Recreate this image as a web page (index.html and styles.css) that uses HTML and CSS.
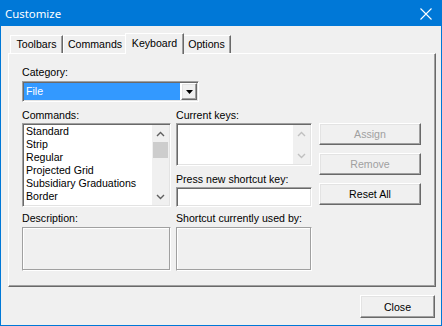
FILE: index.html
```html
<!DOCTYPE html>
<html lang="en">
<head>
  <meta charset="UTF-8">
  <title>Customize</title>
  <link rel="stylesheet" href="styles.css">
</head>
<body>
  <div class="window">
    <!-- Title bar -->
    <div class="titlebar">
      <span class="title">Customize</span>
      <svg class="close-x" width="12" height="12" viewBox="0 0 12 12">
        <path d="M0.5 0.5L11.5 11.5M11.5 0.5L0.5 11.5" stroke="#fff" stroke-width="1.1" fill="none"/>
      </svg>
    </div>

    <div class="client">
      <!-- Tabs -->
      <div class="tabs">
        <div class="tab tab-toolbars">Toolbars</div>
        <div class="tab tab-commands">Commands</div>
        <div class="tab tab-keyboard active">Keyboard</div>
        <div class="tab tab-options">Options</div>
      </div>

      <!-- Keyboard page -->
      <div class="panel">
        <div class="label">Category:</div>
        <div class="combo sunken">
          <div class="combo-value">File</div>
          <div class="combo-btn raised">
            <svg width="7" height="4" viewBox="0 0 7 4"><path d="M0 0H7L3.5 4Z" fill="#000"/></svg>
          </div>
        </div>

        <div class="keys">
          <div class="col col-commands">
            <div class="label">Commands:</div>
            <div class="listbox sunken">
              <ul class="items">
                <li>Standard</li>
                <li>Strip</li>
                <li>Regular</li>
                <li>Projected Grid</li>
                <li>Subsidiary Graduations</li>
                <li>Border</li>
                <li class="partial">Scale Bar</li>
              </ul>
              <div class="vscroll">
                <div class="arrow">
                  <svg width="9" height="6" viewBox="0 0 9 6"><path d="M1 5L4.5 1.5L8 5" stroke="#606060" stroke-width="1.4" fill="none"/></svg>
                </div>
                <div class="thumb"></div>
                <div class="track"></div>
                <div class="arrow">
                  <svg width="9" height="6" viewBox="0 0 9 6"><path d="M1 1L4.5 4.5L8 1" stroke="#606060" stroke-width="1.4" fill="none"/></svg>
                </div>
              </div>
            </div>
          </div>

          <div class="col col-keys">
            <div class="label">Current keys:</div>
            <div class="keybox sunken">
              <div class="keylist"></div>
              <div class="vscroll disabled">
                <div class="arrow">
                  <svg width="9" height="6" viewBox="0 0 9 6"><path d="M1 5L4.5 1.5L8 5" stroke="#c0c0c0" stroke-width="1.4" fill="none"/></svg>
                </div>
                <div class="track"></div>
                <div class="arrow">
                  <svg width="9" height="6" viewBox="0 0 9 6"><path d="M1 1L4.5 4.5L8 1" stroke="#c0c0c0" stroke-width="1.4" fill="none"/></svg>
                </div>
              </div>
            </div>
            <div class="label label-press">Press new shortcut key:</div>
            <div class="input sunken"></div>
          </div>

          <div class="col col-buttons">
            <button class="btn raised" disabled>Assign</button>
            <button class="btn raised" disabled>Remove</button>
            <button class="btn raised">Reset All</button>
          </div>
        </div>

        <div class="info">
          <div class="col col-commands">
            <div class="label">Description:</div>
            <div class="static"></div>
          </div>
          <div class="col col-keys">
            <div class="label">Shortcut currently used by:</div>
            <div class="static"></div>
          </div>
        </div>
      </div>

      <div class="footer">
        <button class="btn raised btn-close">Close</button>
      </div>
    </div>
  </div>
</body>
</html>
```

FILE: styles.css
```css
/* Basic Reset */
* {
  margin: 0;
  padding: 0;
  box-sizing: border-box;
}

body {
  background-color: #f0f0f0;
  font-family: "Liberation Sans", Arial, sans-serif;
  font-size: 10.6px;
  color: #000;
}

/* Window frame */
.window {
  width: 442px;
  height: 326px;
  border: 1px solid #0078d7;
  border-top: none;
  background-color: #f0f0f0;
  display: flex;
  flex-direction: column;
}

.titlebar {
  height: 26px;
  margin: 0 -1px;
  background-color: #0078d7;
  display: flex;
  align-items: center;
  justify-content: space-between;
  padding: 0 10px 0 5px;
}

.title {
  color: #fff;
  font-family: "Noto Sans", sans-serif;
  font-size: 11.4px;
}

.close-x {
  display: block;
  margin-top: 1px;
}

.client {
  flex: 1;
  padding: 7px 6px 0 7px;
  display: flex;
  flex-direction: column;
}

/* 3D borders */
.sunken {
  border: 1px solid;
  border-color: #a0a0a0 #fff #fff #a0a0a0;
  box-shadow: inset 1px 1px #696969, inset -1px -1px #e3e3e3;
  background-color: #fff;
  padding: 1px;
}

.raised {
  border: 1px solid;
  border-color: #fff #696969 #696969 #fff;
  box-shadow: inset -1px -1px #a0a0a0, inset 1px 1px #e3e3e3;
  background-color: #f0f0f0;
}

/* Tabs */
.tabs {
  display: flex;
  align-items: flex-end;
  height: 20px;
  padding-left: 2px;
}

.tab {
  height: 18px;
  line-height: 17px;
  text-align: center;
  border: 1px solid;
  border-bottom: none;
  border-color: #fff #696969 #fff #fff;
  box-shadow: inset -1px 0 #a0a0a0;
  background-color: #f0f0f0;
}

.tab-toolbars { width: 53px; }
.tab-commands { width: 64px; }
.tab-keyboard { width: 59px; }
.tab-options { width: 49px; }

.tab.active {
  height: 21px;
  line-height: 18px;
  margin: 0 -2px -1px;
  position: relative;
  z-index: 1;
}

/* Page */
.panel {
  width: 428px;
  height: 234px;
  border: 1px solid;
  border-color: #fff #696969 #696969 #fff;
  box-shadow: inset -1px -1px #a0a0a0;
  padding: 12px 0 0 13px;
}

.label {
  line-height: 13px;
  height: 13px;
  white-space: nowrap;
}

.combo {
  width: 177px;
  height: 21px;
  margin-top: 2px;
  display: flex;
  padding: 1px;
}

.combo-value {
  flex: 1;
  margin-right: 1px;
  background-color: #3399ff;
  color: #fff;
  line-height: 17px;
  padding-left: 2px;
}

.combo-btn {
  width: 16px;
  display: flex;
  align-items: center;
  justify-content: center;
}

.combo-btn svg {
  display: block;
}

.keys {
  display: flex;
  margin-top: 7px;
}

.col {
  display: flex;
  flex-direction: column;
}

.col-commands {
  width: 149px;
  margin-right: 5px;
}

.col-keys {
  width: 136px;
  margin-right: 7px;
}

.col-buttons {
  width: 102px;
  padding-top: 14px;
  gap: 8px;
}

.col .label {
  margin-bottom: 1px;
}

/* Commands list */
.listbox {
  height: 84px;
  display: flex;
  overflow: hidden;
}

.items {
  flex: 1;
  list-style: none;
  overflow: hidden;
  padding-left: 1px;
}

.items li {
  line-height: 13px;
  height: 13px;
  padding-left: 1px;
  white-space: nowrap;
}

/* last row only shows its top edge in the list */
.items li.partial {
  height: 2px;
  overflow: hidden;
}

.vscroll {
  width: 17px;
  background-color: #f0f0f0;
  display: flex;
  flex-direction: column;
}

.vscroll .arrow {
  height: 17px;
  display: flex;
  align-items: center;
  justify-content: center;
}

.vscroll .arrow svg {
  display: block;
}

.vscroll .thumb {
  height: 16px;
  margin: 0 1px;
  background-color: #cdcdcd;
}

.vscroll .track {
  flex: 1;
}

.keybox {
  height: 43px;
  display: flex;
}

.keylist {
  flex: 1;
}

.label-press {
  margin-top: 7px;
}

.input {
  height: 20px;
}

/* Buttons */
.btn {
  font-family: inherit;
  font-size: 10.6px;
  color: #000;
  height: 22px;
  width: 102px;
  cursor: default;
}

.btn:disabled {
  color: #a0a0a0;
}

/* Description row */
.info {
  display: flex;
  margin-top: 5px;
}

.info .label {
  margin-bottom: 2px;
}

.static {
  height: 44px;
  border: 1px solid;
  border-color: #a0a0a0 #fff #fff #a0a0a0;
  box-shadow: inset -1px -1px #a0a0a0, inset 1px 1px #fff;
}

/* Footer */
.footer {
  display: flex;
  justify-content: flex-end;
  padding-top: 8px;
}

.btn-close {
  width: 75px;
  height: 23px;
}
```
